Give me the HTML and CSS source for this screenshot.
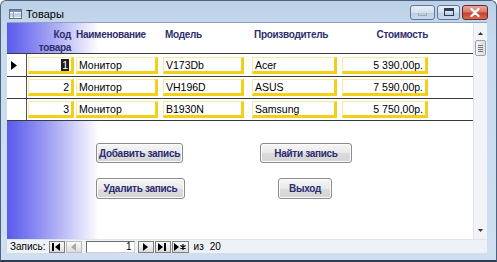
FILE: index.html
```html
<!DOCTYPE html>
<html lang="ru">
<head>
<meta charset="utf-8">
<title>Товары</title>
<link rel="stylesheet" href="styles.css">
</head>
<body>
<div class="window">
  <div class="titlebar">
    <svg class="app-icon" width="13" height="10" viewBox="0 0 13 10">
      <rect x="0.5" y="0.5" width="12" height="9" fill="#fff" stroke="#5a6f8c"/>
      <rect x="1" y="1" width="11" height="2" fill="#6f8fc2"/>
      <line x1="1" y1="5" x2="12" y2="5" stroke="#8fa3c0"/>
      <line x1="1" y1="7" x2="12" y2="7" stroke="#8fa3c0"/>
      <line x1="4.5" y1="3" x2="4.5" y2="9" stroke="#8fa3c0"/>
    </svg>
    <span class="title">Товары</span>
    <div class="caption-buttons">
      <span class="cap-btn min"><svg width="9" height="3" viewBox="0 0 9 3"><rect x="0" y="0" width="9" height="2" fill="#fff" stroke="#3d4f66" stroke-width="0.6"/></svg></span>
      <span class="cap-btn max"><svg width="10" height="8" viewBox="0 0 10 8"><rect x="0.5" y="0.5" width="9" height="7" fill="none" stroke="#2c3d55"/><rect x="1" y="1" width="8" height="2" fill="#2c3d55"/></svg></span>
      <span class="cap-btn close"><svg width="10" height="9" viewBox="0 0 10 9"><path d="M1.5 1 L8.5 8 M8.5 1 L1.5 8" stroke="#fff" stroke-width="2.2" stroke-linecap="round"/></svg></span>
    </div>
  </div>
  <div class="client">
    <div class="main">
      <div class="form">
        <div class="header grid">
          <div></div>
          <div class="h code">Код<br>товара</div>
          <div class="h">Наименование</div>
          <div class="h pad">Модель</div>
          <div class="h pad">Производитель</div>
          <div class="h price">Стоимость</div>
        </div>
        <div class="detail">
          <div class="row grid first">
            <div class="selector"><svg width="6" height="9" viewBox="0 0 6 9"><path d="M0 0 L6 4.5 L0 9 Z" fill="#000"/></svg></div>
            <div class="cell"><span class="box num"><span class="sel">1</span></span></div>
            <div class="cell"><span class="box">Монитор</span></div>
            <div class="cell"><span class="box">V173Db</span></div>
            <div class="cell"><span class="box">Acer</span></div>
            <div class="cell"><span class="box num">5 390,00р.</span></div>
          </div>
          <div class="row grid">
            <div class="selector"></div>
            <div class="cell"><span class="box num">2</span></div>
            <div class="cell"><span class="box">Монитор</span></div>
            <div class="cell"><span class="box">VH196D</span></div>
            <div class="cell"><span class="box">ASUS</span></div>
            <div class="cell"><span class="box num">7 590,00р.</span></div>
          </div>
          <div class="row grid">
            <div class="selector"></div>
            <div class="cell"><span class="box num">3</span></div>
            <div class="cell"><span class="box">Монитор</span></div>
            <div class="cell"><span class="box">B1930N</span></div>
            <div class="cell"><span class="box">Samsung</span></div>
            <div class="cell"><span class="box num">5 750,00р.</span></div>
          </div>
        </div>
        <div class="footer">
          <div class="btn-row r1">
            <button class="btn add">Добавить запись</button>
            <button class="btn find">Найти запись</button>
          </div>
          <div class="btn-row r2">
            <button class="btn del">Удалить запись</button>
            <button class="btn exit">Выход</button>
          </div>
        </div>
      </div>
      <div class="vscroll">
        <span class="arrow up"><svg width="5" height="3" viewBox="0 0 5 3"><path d="M0 3 L2.5 0 L5 3 Z" fill="#333"/></svg></span>
        <span class="thumb"><i></i><i></i><i></i><i></i></span>
        <span class="track"></span>
        <span class="arrow down"><svg width="5" height="3" viewBox="0 0 5 3"><path d="M0 0 L2.5 3 L5 0 Z" fill="#333"/></svg></span>
      </div>
    </div>
    <div class="nav">
      <span class="nav-label">Запись:</span>
      <span class="nbtn first-btn"><svg width="9" height="8" viewBox="0 0 9 8"><rect x="0" y="0" width="2" height="8" fill="#000"/><path d="M8 0 L3 4 L8 8 Z" fill="#000"/></svg></span>
      <span class="nbtn prev disabled"><svg width="5" height="8" viewBox="0 0 5 8"><path d="M5 0 L0 4 L5 8 Z" fill="#a9a9a9"/></svg></span>
      <span class="nav-input">1</span>
      <span class="nbtn next"><svg width="5" height="8" viewBox="0 0 5 8"><path d="M0 0 L5 4 L0 8 Z" fill="#000"/></svg></span>
      <span class="nbtn last"><svg width="9" height="8" viewBox="0 0 9 8"><path d="M0 0 L5 4 L0 8 Z" fill="#000"/><rect x="6" y="0" width="2" height="8" fill="#000"/></svg></span>
      <span class="nbtn new"><svg width="12" height="8" viewBox="0 0 12 8"><path d="M0 0 L5 4 L0 8 Z" fill="#000"/><path d="M9 1 V7 M6.4 2.5 L11.6 5.5 M6.4 5.5 L11.6 2.5" stroke="#000" stroke-width="1.2"/></svg></span>
      <span class="nav-of">из</span>
      <span class="nav-total">20</span>
    </div>
  </div>
</div>
</body>
</html>
```
FILE: styles.css
```css
html, body {
  margin: 0;
  padding: 0;
  background: #ffffff;
}
body {
  width: 497px;
  height: 262px;
  overflow: hidden;
  font-family: "Liberation Sans", Arial, sans-serif;
}
.window {
  box-sizing: border-box;
  width: 497px;
  height: 262px;
  background: linear-gradient(to bottom, #bcd0e7 0, #c9dbee 40px, #cfdff0 100%);
  border: 1px solid #4d6280;
  border-bottom: 2px solid #2f3d50;
  border-radius: 6px 6px 0 0;
  padding: 0 9px 7px 6px;
  display: flex;
  flex-direction: column;
}
.titlebar {
  height: 21px;
  display: flex;
  align-items: center;
  flex-shrink: 0;
}
.app-icon {
  margin-left: 2px;
  margin-top: 5px;
}
.title {
  margin-left: 4px;
  margin-top: 5px;
  font-size: 11px;
  color: #000;
}
.caption-buttons {
  margin-left: auto;
  display: flex;
  gap: 2px;
  margin-top: 1px;
  margin-right: -1px;
}
.cap-btn {
  box-sizing: border-box;
  height: 15px;
  width: 25px;
  border: 1px solid #5f7594;
  border-radius: 3px;
  background: linear-gradient(to bottom, #e9f0f8 0, #d3e0ef 50%, #bccde3 51%, #cbdaec 100%);
  display: flex;
  align-items: center;
  justify-content: center;
}
.cap-btn.max { width: 23px; }
.cap-btn.min svg { margin-top: 5px; }
.cap-btn.close {
  width: 26px;
  border-color: #6d2a23;
  background: linear-gradient(to bottom, #e8a89a 0, #d8776a 45%, #c4412f 55%, #d86c52 100%);
}
.client {
  flex: 1;
  display: flex;
  flex-direction: column;
  background: #eef2f7;
  border-top: 1px solid #8ea3bd;
}
.main {
  display: flex;
  height: 216px;
}
.form {
  width: 466px;
  display: flex;
  flex-direction: column;
}
.grid {
  display: grid;
  grid-template-columns: 20px 49px 87px 89px 90px 86px;
}
.header {
  height: 30px;
  box-sizing: border-box;
  background: linear-gradient(to right, #5a5aee 0, #7a7af0 20px, #a6a6f4 45px, #d6d6fa 70px, #ffffff 92px);
  padding-top: 5px;
  font-size: 10px;
  font-weight: bold;
  color: #2d2d6e;
  letter-spacing: -0.3px;
}
.h {
  line-height: 13px;
  white-space: nowrap;
}
.h.code {
  text-align: right;
  padding-right: 5px;
}
.h.pad { padding-left: 2px; }
.h.price { text-align: right; }
.detail {
  background: #fff;
  border-bottom: 1px solid #3a3a3a;
}
.row {
  height: 22px;
  box-sizing: border-box;
  border-top: 1px solid #3a3a3a;
  align-items: center;
}
.row.first { height: 23px; }
.selector {
  height: 100%;
  border-right: 1px solid #555;
  box-sizing: border-box;
  display: flex;
  align-items: center;
  padding-left: 4px;
}
.cell {
  display: flex;
  align-items: center;
  height: 100%;
}
.box {
  box-sizing: border-box;
  display: block;
  height: 17px;
  line-height: 13px;
  border-top: 1px solid #f6ea9c;
  border-left: 1px solid #f6ea9c;
  border-right: 3px solid #f3cf16;
  border-bottom: 3px solid #f3cf16;
  background: #fff;
  font-size: 10.5px;
  color: #000;
  padding: 1px 2px 0 2px;
  white-space: nowrap;
}
.row .cell:nth-child(2) .box { width: 46px; margin-left: 1px; }
.row .cell:nth-child(3) .box { width: 82px; }
.row .cell:nth-child(4) .box { width: 81px; }
.row .cell:nth-child(5) .box { width: 85px; }
.row .cell:nth-child(6) .box { width: 86px; }
.box.num { text-align: right; }
.sel {
  background: #1e1e1e;
  color: #fff;
  padding: 0 1px;
}
.footer {
  flex: 1;
  background: linear-gradient(to right, #5a5aee 0, #7a7af0 20px, #a6a6f4 45px, #d6d6fa 70px, #ffffff 92px);
  padding-left: 89px;
  padding-top: 22px;
  box-sizing: border-box;
}
.btn-row {
  display: flex;
}
.btn-row.r2 { margin-top: 15px; }
.btn {
  box-sizing: border-box;
  height: 20px;
  border: 1px solid #8b8c8e;
  border-radius: 3px;
  background: linear-gradient(to bottom, #f6f6f6 0, #e9e9e9 50%, #dcdcdc 51%, #d4d4d4 100%);
  font-family: "Liberation Sans", Arial, sans-serif;
  font-size: 10px;
  font-weight: bold;
  letter-spacing: -0.3px;
  white-space: nowrap;
  color: #2b2b72;
  padding: 0;
  box-shadow: inset 0 0 0 1px #fbfbfb;
}
.btn.add { width: 87px; }
.btn.find { width: 92px; margin-left: 77px; }
.btn.del { width: 89px; height: 21px; }
.btn.exit { width: 54px; height: 21px; margin-left: 93px; }
.vscroll {
  width: 14px;
  display: flex;
  flex-direction: column;
  align-items: center;
  background: #f1f3f6;
  border-left: 1px solid #e2e6eb;
  box-sizing: border-box;
}
.arrow {
  height: 13px;
  display: flex;
  align-items: center;
  justify-content: center;
}
.arrow.up { margin-top: 4px; }
.thumb {
  box-sizing: border-box;
  width: 11px;
  height: 16px;
  border: 1px solid #9aa3ad;
  border-radius: 2px;
  background: linear-gradient(to right, #f4f4f4, #dedede);
  display: flex;
  flex-direction: column;
  align-items: center;
  justify-content: center;
  gap: 1px;
}
.thumb i {
  display: block;
  width: 5px;
  height: 1px;
  background: #6e747b;
}
.track { flex: 1; }
.arrow.down { margin-bottom: 2px; }
.nav {
  flex: 1;
  display: flex;
  align-items: center;
  font-size: 10px;
  color: #000;
  background: #eef1f5;
  border-top: 1px solid #e0e4ea;
}
.nav-label {
  margin-left: 3px;
  margin-right: 3px;
}
.nbtn {
  box-sizing: border-box;
  width: 16px;
  height: 12px;
  border: 1px solid #7d7d7d;
  background: linear-gradient(to bottom, #fafafa, #dcdcdc);
  display: flex;
  align-items: center;
  justify-content: center;
  margin-right: 1px;
}
.nbtn.disabled { border-color: #bdbdbd; margin-right: 4px; }
.nbtn.new { width: 17px; }
.nav-input {
  box-sizing: border-box;
  width: 49px;
  height: 12px;
  border: 1px solid #6c6c6c;
  border-right-color: #d0d0d0;
  border-bottom-color: #d0d0d0;
  background: #fff;
  text-align: right;
  padding-right: 2px;
  line-height: 10px;
  margin-right: 3px;
}
.nav-of { margin-left: 4px; }
.nav-total { margin-left: 6px; }
```
